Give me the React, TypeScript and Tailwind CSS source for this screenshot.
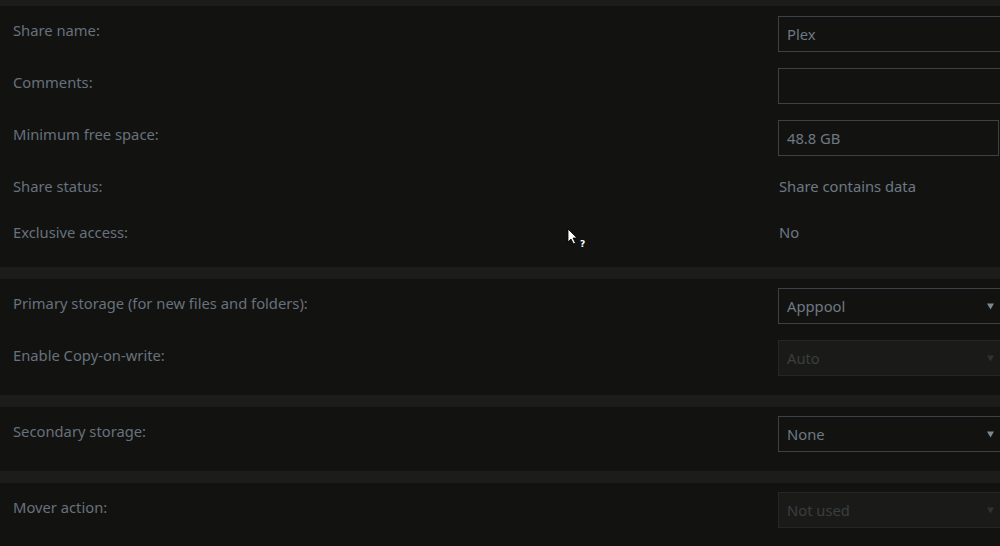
import React from "react";

// Share settings form, dark theme
const font = { fontFamily: '"Noto Sans", "Open Sans", sans-serif' };

function TextBox({ value, narrow }: { value: string; narrow?: boolean }) {
  return (
    <div
      className={`h-[36px] ${narrow ? "w-[221px]" : "w-[240px]"} shrink-0 border border-[#3b4247] bg-[#121311] px-[8px] flex items-center text-[#6f7883]`}
    >
      {value}
    </div>
  );
}

function Select({ value, disabled }: { value: string; disabled?: boolean }) {
  return (
    <div
      className={`h-[36px] w-[226px] shrink-0 border flex items-center pl-[8px] pr-[8px] ${
        disabled
          ? "border-[#242724] bg-[#1a1b19] text-[#3a3e3f]"
          : "border-[#3b4247] bg-[#121311] text-[#6f7883]"
      }`}
    >
      <span className="flex-1">{value}</span>
      <svg width="7" height="7" viewBox="0 0 7 7" className="mr-[1px]">
        <path d="M0 0.5 H7 L3.5 6.5 Z" fill={disabled ? "#2e3233" : "#7c8792"} />
      </svg>
    </div>
  );
}

function Row({
  label,
  children,
  tall = true,
  top = false,
}: {
  label: string;
  children: React.ReactNode;
  tall?: boolean;
  top?: boolean;
}) {
  return (
    <div className={`flex pl-[13px] ${tall ? "h-[52px]" : "h-[46px]"}`}>
      <div className={`w-[765px] shrink-0 leading-[20px] ${top ? "pt-[4px]" : "pt-[5px]"}`}>{label}</div>
      {children}
    </div>
  );
}

function Band() {
  return <div className="h-[12px] bg-[#1c1d1b]" />;
}

export default function App() {
  return (
    <div
      className="relative w-[1000px] h-[546px] overflow-hidden bg-[#121311] text-[14.75px] text-[#68717c]"
      style={font}
    >
      <div className="h-[6px] bg-[#1c1d1b]" />

      <section className="pt-[10px] h-[261px]">
        <Row label="Share name:" top>
          <TextBox value="Plex" />
        </Row>
        <Row label="Comments:" top>
          <TextBox value="" />
        </Row>
        <Row label="Minimum free space:" top>
          <TextBox value="48.8 GB" narrow />
        </Row>
        <Row label="Share status:" tall={false} top>
          <div className="pt-[4px] pl-[1px] leading-[20px] text-[#6f7883]">Share contains data</div>
        </Row>
        <Row label="Exclusive access:" tall={false} top>
          <div className="pt-[4px] pl-[1px] leading-[20px] text-[#6f7883]">No</div>
        </Row>
      </section>

      <Band />

      <section className="pt-[9px] h-[116px]">
        <Row label="Primary storage (for new files and folders):">
          <Select value="Apppool" />
        </Row>
        <Row label="Enable Copy-on-write:">
          <Select value="Auto" disabled />
        </Row>
      </section>

      <Band />

      <section className="pt-[9px] h-[64px]">
        <Row label="Secondary storage:">
          <Select value="None" />
        </Row>
      </section>

      <Band />

      <section className="pt-[9px]">
        <Row label="Mover action:">
          <Select value="Not used" disabled />
        </Row>
      </section>

      {/* help cursor */}
      <svg className="absolute left-[567px] top-[228px]" width="22" height="22" viewBox="0 0 22 22">
        <path d="M1 1 L1 14 L4 11 L6.5 16 L8.5 15 L6 10 L10 10 Z" fill="#ffffff" stroke="#000" strokeWidth="0.8" />
        <text x="13" y="19" fontSize="9" fontWeight="700" fill="#ffffff" fontFamily="DejaVu Sans, sans-serif">?</text>
      </svg>
    </div>
  );
}
